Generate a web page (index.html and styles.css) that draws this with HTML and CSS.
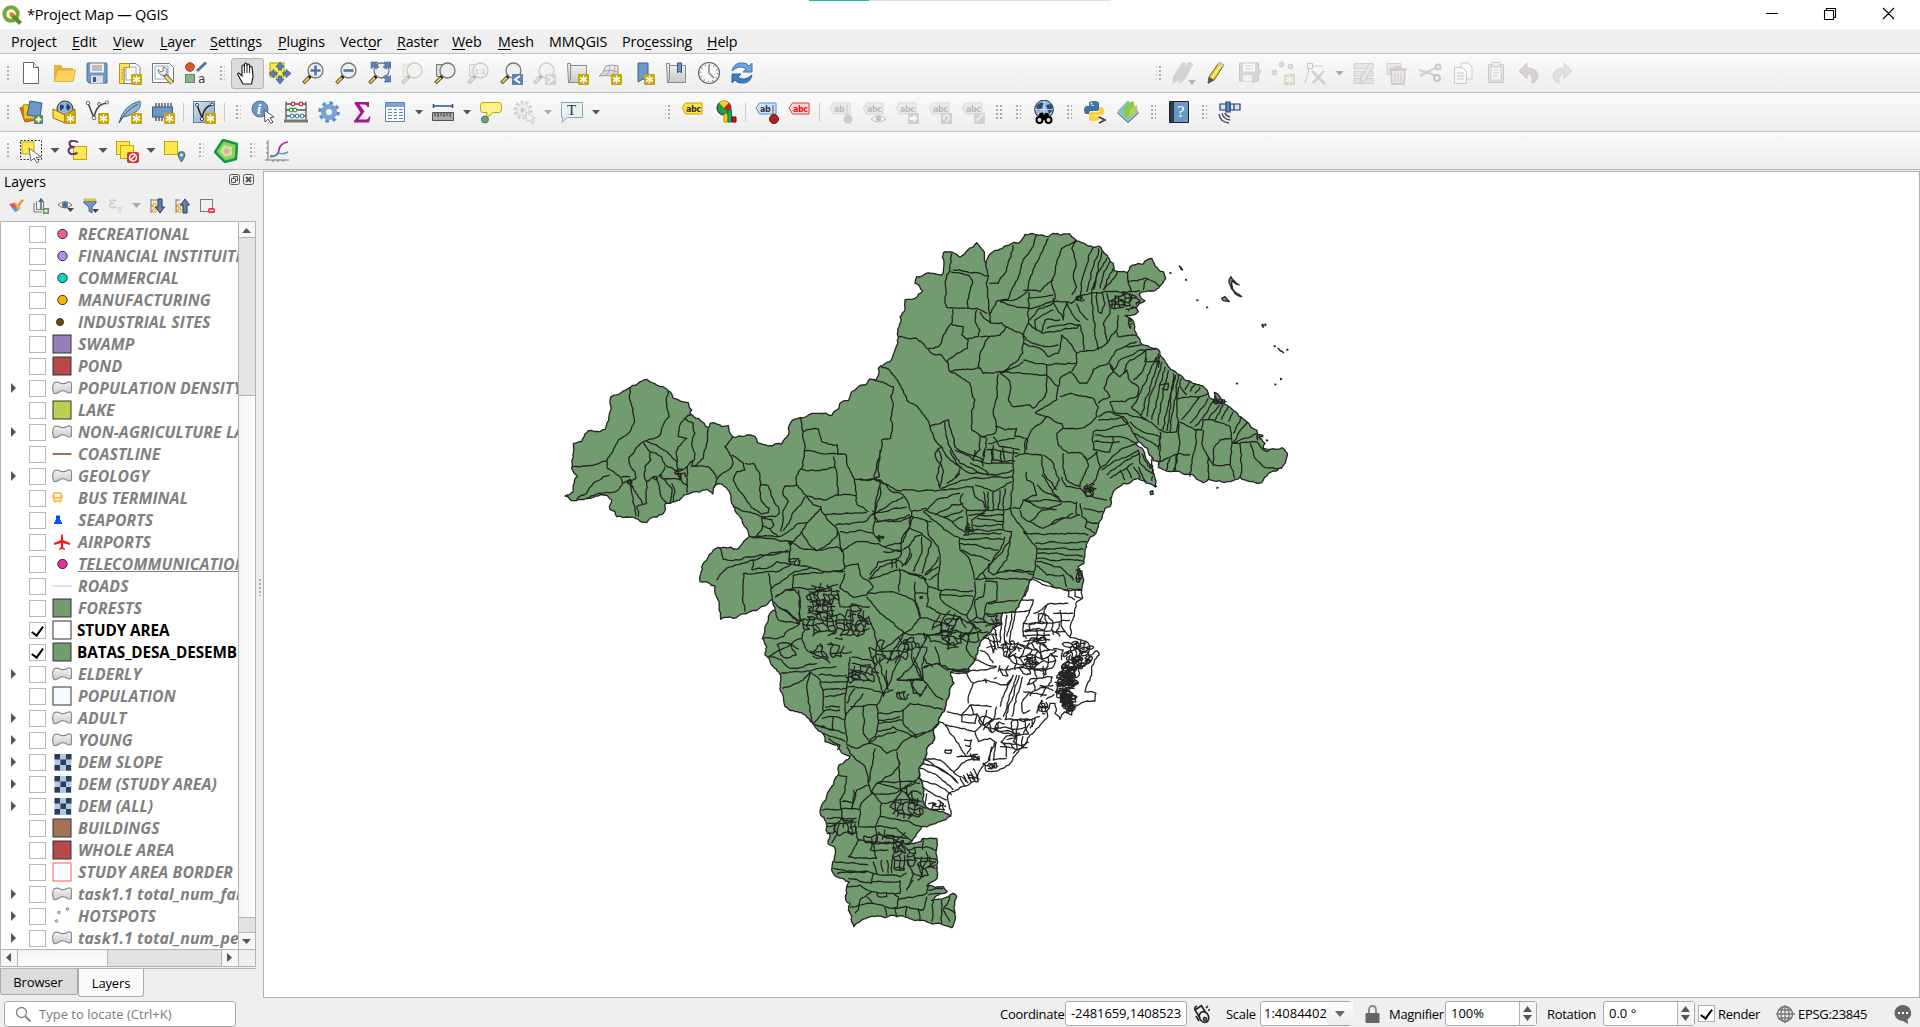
FILE: index.html
```html
<!DOCTYPE html>
<html lang="en">
<head>
<meta charset="utf-8">
<title>*Project Map — QGIS</title>
<link rel="stylesheet" href="styles.css">
</head>
<body>
<svg class="defs" width="0" height="0">
<defs>
<linearGradient id="gg" x1="0" y1="0" x2="0" y2="1"><stop offset="0" stop-color="#f4f4f4"/><stop offset="1" stop-color="#c9c9c9"/></linearGradient>
<linearGradient id="gb" x1="0" y1="0" x2="1" y2="1"><stop offset="0" stop-color="#dde7f2"/><stop offset="1" stop-color="#7d9fc8"/></linearGradient>
<g id="star"><rect x="13" y="13" width="11" height="11" rx="1" fill="#c9a50b"/><path d="M18.500 14.500v8M15 16.500l7 4M22 16.500l-7 4" stroke="#fff" stroke-width="1.500"/></g>
<g id="lens"><path d="M9 15.500L2.500 22" stroke="#333" stroke-width="3.600"/><path d="M8 16.500L3 21.500" stroke="#f3c13a" stroke-width="2.200"/><path d="M11 13.500l-3 3" stroke="#111" stroke-width="3"/><circle cx="14.500" cy="9.500" r="7.500" fill="#eee" stroke="#777" stroke-width="1.300"/></g>
<g id="tag"><path d="M1 8l3.500-5H21v11H4.500z"/></g>
<symbol id="new" viewBox="0 0 24 24"><path d="M4.500 1.500h10l5 5v16h-15z" fill="#fff" stroke="#666"/><path d="M14.500 1.500v5h5" fill="#eee" stroke="#666"/></symbol>
<symbol id="open" viewBox="0 0 24 24"><path d="M2 20V4h7l2 3h10v13z" fill="#e6b13c"/><path d="M2 20.500L6 9h17.500l-2.500 11.500z" fill="#ffd45e" stroke="#e0ae3a"/></symbol>
<symbol id="save" viewBox="0 0 24 24"><path d="M2 3q0-1 1-1h18q1 0 1 1v19H4l-2-2z" fill="#6d97c4" stroke="#4d7096"/><rect x="5" y="2.500" width="14" height="9" fill="#eef0ee"/><path d="M7 5h10M7 7h10M7 9h10" stroke="#888"/><rect x="6" y="14.500" width="12" height="7.500" fill="#ddd"/><rect x="8" y="16" width="3" height="5" fill="#43597c"/></symbol>
<symbol id="layout" viewBox="0 0 24 24"><path d="M6 2.500h12l4 4v16H6z" fill="#fff" stroke="#777"/><path d="M8 6h10v13H8z" fill="none" stroke="#8aa4d8"/><path d="M1.500 2.500h10v4H6v16H1.500z" fill="#fbe35e" stroke="#b8931c"/><path d="M3 9h2M3 12h2M3 15h2M3 18h2" stroke="#b8931c"/><use href="#star"/></symbol>
<symbol id="manager" viewBox="0 0 24 24"><path d="M1.500 2.500h17l4 4v15h-21z" fill="#fff" stroke="#777"/><path d="M4 5h13v13H4z" fill="none" stroke="#8aa4d8"/><path d="M13 13l8 9" stroke="#555" stroke-width="4.500"/><path d="M14.500 15l6.500 7" stroke="#f0ce62" stroke-width="3"/><path d="M7 8.500l3 2.500 2-1 0-3.500q5 0 4 5l-2 3q-7 0-7-6z" fill="#eee" stroke="#777"/></symbol>
<symbol id="style" viewBox="0 0 24 24"><circle cx="6" cy="6" r="4.300" fill="#d9592c" stroke="#a33e18"/><path d="M13 10L22 1.500" fill="none" stroke="#4f79a6" stroke-width="3"/><rect x="1.500" y="13.500" width="9" height="8" fill="#8fb28d" stroke="#5b8a5a"/><text x="14" y="22" class="ic-a">a</text></symbol>
<symbol id="hand" viewBox="0 0 24 24"><path d="M8 22L3 13q-1-2 1-2l3 3V4q1-2 2.400 0V2q1.300-2 2.600 0v1q1.300-1.800 2.600 0v2q1.300-1.500 2.600.5L18 15l-1.500 7z" fill="#fff" stroke="#222" stroke-width="1.200"/><path d="M9.400 4v7M12 3v8M14.600 5v6" stroke="#222"/></symbol>
<symbol id="panto" viewBox="0 0 24 24"><rect x="2" y="2" width="14" height="14" fill="#fce94f" stroke="#b8a000"/><path d="M12 1l4 5h-2.500v3h-3V6H8zM12 23l4-5h-2.500v-3h-3v3H8zM1 12.500l5-4V11h3v3H6v2.500zM23 12.500l-5-4V11h-3v3h3v2.500z" fill="#5b84b1" stroke="#375a80" stroke-width=".8"/></symbol>
<symbol id="zin" viewBox="0 0 24 24"><use href="#lens"/><path d="M14.500 4.500v10M9.500 9.500h10" stroke="#4a78a8" stroke-width="2.600"/></symbol>
<symbol id="zout" viewBox="0 0 24 24"><use href="#lens"/><path d="M9.500 9.500h10" stroke="#4a78a8" stroke-width="2.600"/></symbol>
<symbol id="zfull" viewBox="0 0 24 24"><use href="#lens"/><path d="M4 1h7L9 3l3 3-3 2-3-2-2 2zM24 1h-7l2 2-3 3 3 2 3-2 2 2zM24 21h-7l2-2-3-3 3-2 3 2 2-2z" fill="#5b84b1" stroke="#375a80" stroke-width=".5"/></symbol>
<symbol id="zsel" viewBox="0 0 24 24"><path d="M3 3h14v13H3z" fill="#fce94f" stroke="#aaa"/><use href="#lens"/></symbol>
<symbol id="zlay" viewBox="0 0 24 24"><path d="M3.500 3.500h12v12h-12z" fill="#ddd" stroke="#777"/><use href="#lens"/></symbol>
<symbol id="znat" viewBox="0 0 24 24"><path d="M3.500 3.500h12v12h-12z" fill="#ddd" stroke="#777"/><use href="#lens"/><text x="9" y="13" class="ic-s">1:1</text></symbol>
<symbol id="zlast" viewBox="0 0 24 24"><use href="#lens"/><rect x="13" y="13" width="11" height="11" fill="#5b84b1"/><path d="M21 15l-5 3.500 5 3.500" fill="none" stroke="#fff" stroke-width="1.800"/></symbol>
<symbol id="znext" viewBox="0 0 24 24"><use href="#lens"/><rect x="13" y="13" width="11" height="11" fill="#89a"/><path d="M16 15l5 3.500-5 3.500" fill="none" stroke="#fff" stroke-width="1.800"/></symbol>
<symbol id="newmap" viewBox="0 0 24 24"><path d="M2.500 2.500h3v2h16v17h-18z" fill="url(#gg)" stroke="#888"/><path d="M5.500 2.500v16l-2 3" fill="none" stroke="#888"/><use href="#star"/></symbol>
<symbol id="new3d" viewBox="0 0 24 24"><path d="M1 15q4-2 7-10 6-2 12 0v12q-9-4-19-2z" fill="url(#gg)" stroke="#999"/><path d="M5 10q8-2 15 1M12 4q0 8-5 11M17 4q0 8-3 12" fill="none" stroke="#999" stroke-width=".8"/><use href="#star"/></symbol>
<symbol id="book" viewBox="0 0 24 24"><path d="M7 2h10v20l-5-4-5 3z" fill="#6d97c4" stroke="#3f6492"/><use href="#star"/></symbol>
<symbol id="showbook" viewBox="0 0 24 24"><path d="M2.500 2.500h3v2h16v17h-18z" fill="url(#gg)" stroke="#888"/><path d="M5.500 2.500v16l-2 3" fill="none" stroke="#888"/><path d="M13.500 2h4v10l-2-2-2 2z" fill="#6d97c4" stroke="#2f4f7c"/></symbol>
<symbol id="clock" viewBox="0 0 24 24"><circle cx="12" cy="12" r="10.500" fill="#f6f6f6" stroke="#666" stroke-width="1.200"/><circle cx="12" cy="12" r="8.500" fill="none" stroke="#5b84b1" stroke-width="1.500" stroke-dasharray="1 3.450"/><path d="M12 4v8l5 5" fill="none" stroke="#888" stroke-width="1.500"/></symbol>
<symbol id="refresh" viewBox="0 0 24 24"><path d="M2 10Q4 1 13 2q4 0 6 3l3-3v9h-9l3-3q-6-5-14 2z" fill="#6fa3dc" stroke="#3c74b4"/><path d="M22 14q-2 9-11 8-4 0-6-3l-3 3v-9h9l-3 3q6 5 14-2z" fill="#3f7bc0" stroke="#2e66a6"/></symbol>
<symbol id="pencil" viewBox="0 0 24 24"><path d="M3 22l1-6L14 1.500l5 2.500-10 15z" fill="#e7cf2c" stroke="#6c6420"/><path d="M7 17L16.500 3" stroke="#fff6a0" stroke-width="1.500"/><path d="M3 23l1-7 5 3z" fill="#555"/><path d="M14 1l5 3-1.500 2.500-5-3z" fill="#ccc"/></symbol>
<symbol id="pencils" viewBox="0 0 24 24"><path d="M1 22l1-7L11 1l3 2-8 16zM7 22l1-7L17 1l4 2-9 16z" fill="#a09080" stroke="#888"/><path d="M16 19h8l-4 5z" fill="#333"/></symbol>
<symbol id="sedits" viewBox="0 0 24 24"><path d="M1.500 2h19v18h-19z" fill="#999" stroke="#666"/><path d="M5 2.500h12v8H5z" fill="#fff"/><path d="M5 14h9v6H5z" fill="#eee"/><path d="M7 5h8M7 8h8" stroke="#888"/><path d="M14 23l1-5 7-10 2 2-7 11z" fill="#b08a80"/></symbol>
<symbol id="addpt" viewBox="0 0 24 24"><g fill="#aaa" stroke="#777"><circle cx="3.500" cy="11.500" r="2.500"/><circle cx="10.500" cy="3.500" r="2.500"/><circle cx="19.500" cy="5.500" r="2.500"/></g><use href="#star"/></symbol>
<symbol id="vertex" viewBox="0 0 24 24"><path d="M1 22L6 5h13" fill="none" stroke="#666"/><rect x="3.500" y="2.500" width="5" height="5" fill="#eee" stroke="#666"/><path d="M8 10l13 13M20 10L9 22" stroke="#888" stroke-width="2.500"/></symbol>
<symbol id="form" viewBox="0 0 24 24"><g fill="#c9c8a0" stroke="#888860"><path d="M2 2.500h19v5H2zM2 10h19v5H2zM2 17.500h19v5H2z"/></g><path d="M8 22l1-6L18 2l4 2-9 15z" fill="#ccc" stroke="#777"/></symbol>
<symbol id="trash" viewBox="0 0 24 24"><path d="M2 2.500h14v11H2z" fill="#c9c8a0" stroke="#888860"/><path d="M6 9h14l-1 14H7zM4 8h18M10 6h6" fill="#f0c8c8" stroke="#a06060" stroke-width="1.500"/><path d="M10 12v9M13 12v9M16 12v9" stroke="#a06060"/></symbol>
<symbol id="cut" viewBox="0 0 24 24"><path d="M1 9l18 6M2 15L19 6" stroke="#888" stroke-width="2.200"/><g fill="none" stroke="#8a6a6a" stroke-width="2"><circle cx="20" cy="6" r="2.500"/><circle cx="19" cy="17" r="3"/></g></symbol>
<symbol id="copy" viewBox="0 0 24 24"><g fill="#fff" stroke="#777"><path d="M10 2h7l4 4v12H10z"/><path d="M3.500 6.500h8l4 4v12h-12z"/></g><path d="M6 12h7M6 15h7M6 18h7" stroke="#777"/></symbol>
<symbol id="paste" viewBox="0 0 24 24"><path d="M4.500 3.500h15v18h-15z" fill="#bbb" stroke="#777"/><path d="M7 6h10v13H7z" fill="#fff" stroke="#888"/><path d="M8 1.500h8v4H8z" fill="#ddd" stroke="#777"/><path d="M9 9h6M9 12h6M9 15h4" stroke="#777"/></symbol>
<symbol id="undo" viewBox="0 0 24 24"><path d="M2 10l8-8v5q11 0 11 8 0 5-6 7 1-10-5-9v5z" fill="#b08870" stroke="#997766"/></symbol>
<symbol id="redo" viewBox="0 0 24 24"><path d="M22 10l-8-8v5Q3 7 3 15q0 5 6 7-1-10 5-9v5z" fill="#a3bfa3" stroke="#889988"/></symbol>
<symbol id="dsm" viewBox="0 0 24 24"><path d="M1 8l13-3 3 15-11 2z" fill="#d9713a" stroke="#b0501c"/><path d="M4 5l13-1v15H5z" fill="#f5c518" stroke="#a88500"/><path d="M11 1l12 2-2 14-13-2z" fill="#6d97c4" stroke="#335a88"/><rect x="15" y="15" width="9" height="9" rx="1" fill="#4f8f55"/><path d="M19.500 16.500v6M16.500 19.500h6" stroke="#fff" stroke-width="2"/></symbol>
<symbol id="gpkg" viewBox="0 0 24 24"><circle cx="13" cy="9" r="8" fill="#8fb3d9" stroke="#333"/><path d="M8 5q4-2 4 3l-4 3zM15 3l4 4-3 4-2-3z" fill="#2c4460"/><path d="M1 9l12 6v8L1 18z" fill="#fbe24a" stroke="#8a7000"/><path d="M13 15l10-6v9l-10 5z" fill="#e0b400" stroke="#8a7000"/><use href="#star"/></symbol>
<symbol id="shp" viewBox="0 0 24 24"><path d="M3 3l6 15M9 18q2-14 13-15" fill="none" stroke="#444" stroke-width="1.600"/><g fill="#fff" stroke="#666"><circle cx="3" cy="3" r="1.800"/><circle cx="9" cy="18" r="1.800"/><circle cx="14" cy="4" r="1.500"/><circle cx="22" cy="2.500" r="1.500"/></g><use href="#star"/></symbol>
<symbol id="feather" viewBox="0 0 24 24"><path d="M1 23Q5 5 22 1q2 8-6 12-7 4-11 4z" fill="#8fb3d9" stroke="#4a6f96"/><path d="M1 23Q8 10 20 4" fill="none" stroke="#35587e"/><use href="#star"/></symbol>
<symbol id="memory" viewBox="0 0 24 24"><path d="M5 3v18M8 3v18M11 3v18M14 3v18M17 3v18M20 3v18" stroke="#333" stroke-width="1.200"/><rect x="1.500" y="7" width="20" height="10" fill="#6d97c4" stroke="#335a88"/><use href="#star"/></symbol>
<symbol id="virt" viewBox="0 0 24 24"><rect x="1.500" y="1.500" width="21" height="21" fill="url(#gb)" stroke="#5b7da5"/><path d="M5 5l5 13q2-12 10-13" fill="none" stroke="#222" stroke-width="1.500"/><g fill="#fff" stroke="#444"><circle cx="5" cy="5" r="1.600"/><circle cx="10" cy="19" r="1.600"/><circle cx="20" cy="4.500" r="1.400"/></g><use href="#star"/></symbol>
<symbol id="ident" viewBox="0 0 24 24"><circle cx="9" cy="9" r="8" fill="#6d97c4" stroke="#4d7096"/><text x="6" y="14" class="ic-i">i</text><path d="M13 10l10 7-4 .7 3 4.500-2 1.300-3-4.500-3 3z" fill="#fff" stroke="#555"/></symbol>
<symbol id="abacus" viewBox="0 0 24 24"><path d="M2 1.500v18M22 1.500v18M2 4h20M2 10h20M2 16h20" stroke="#555" stroke-width="1.300"/><path d="M0 19.500h24v3H0z" fill="#777"/><g fill="#fff" stroke-width="1.200"><circle cx="9" cy="4" r="1.800" stroke="#c22"/><circle cx="17" cy="4" r="1.800" stroke="#c22"/><circle cx="7" cy="10" r="1.800" stroke="#494"/><circle cx="11" cy="10" r="1.800" stroke="#494"/><circle cx="8" cy="16" r="1.800" stroke="#48b"/><circle cx="13" cy="16" r="1.800" stroke="#48b"/><circle cx="18" cy="16" r="1.800" stroke="#48b"/></g></symbol>
<symbol id="gear" viewBox="0 0 24 24"><circle cx="12" cy="12" r="9" fill="none" stroke="#5b8cc4" stroke-width="3.500" stroke-dasharray="3.500 3.570"/><circle cx="12" cy="12" r="5.500" fill="#f6f6f6" stroke="#79a3d2" stroke-width="5"/></symbol>
<symbol id="sigma" viewBox="0 0 24 24"><path d="M5 2h14v5h-1.500q-.5-2.500-3-2.500H9.500l5 7-6 8H16q2.500 0 3-3h1.500L19 22.500H4v-1.500l6.500-8.500L4.500 3.500z" fill="#a31594"/></symbol>
<symbol id="table" viewBox="0 0 24 24"><path d="M2.500 2.500h19v19h-19z" fill="#fff" stroke="#5b84b1"/><path d="M3 3h18v4H3z" fill="#7ba6d6"/><path d="M5 9.500h4M11 9.500h3M16 9.500h4M5 12.500h4M11 12.500h3M16 12.500h4M5 15.500h4M11 15.500h3M16 15.500h4M5 18.500h4M11 18.500h3M16 18.500h4" stroke="#5b84b1" stroke-width="1.200"/></symbol>
<symbol id="ruler" viewBox="0 0 24 24"><path d="M2 6h20M2.500 4v4M21.500 4v4" stroke="#31577f" stroke-width="1.600"/><path d="M1.500 12.500h21v8h-21z" fill="#aaa" stroke="#555"/><path d="M4 13v3M7 13v4M10 13v3M13 13v4M16 13v3M19 13v4" stroke="#333"/></symbol>
<symbol id="tip" viewBox="0 0 24 24"><path d="M4 2.500h16q2.500 0 2.500 3v4q0 3-2.500 3h-6l-7 6 1-6H4q-2.500 0-2.500-3v-4q0-3 2.500-3z" fill="#fdf18f" stroke="#c8a400"/><circle cx="6" cy="19.500" r="3.500" fill="#6fa06c" stroke="#44709a"/></symbol>
<symbol id="action" viewBox="0 0 24 24"><circle cx="11" cy="10" r="8" fill="none" stroke="#888" stroke-width="3" stroke-dasharray="3 2"/><circle cx="11" cy="10" r="6" fill="#ddd" stroke="#999"/><path d="M9 7l5 3-5 3z" fill="#666"/><path d="M14 12l9 6-3 .7 2 4-2 1-2-4-3 2z" fill="#fff" stroke="#777"/></symbol>
<symbol id="note" viewBox="0 0 24 24"><path d="M1.500 2.500h21v15H7l-5 5 1-5H1.500z" fill="#e8f1f3" stroke="#8aa"/><text x="7" y="15" class="ic-t">T</text></symbol>
<symbol id="abc" viewBox="0 0 24 24"><use href="#tag" fill="#ffe14d" stroke="#c8a400"/><text x="5" y="11.500" class="ic-l">abc</text></symbol>
<symbol id="diag" viewBox="0 0 24 24"><circle cx="10" cy="8" r="7" fill="#19a24a" stroke="#222"/><path d="M10 8L5 2.500Q10-1 15 3z" fill="#fbd21b"/><path d="M10 8l5-5q4 5 0 10z" fill="#d21919"/><path d="M10 14h4v8h-4z" fill="#fbd21b" stroke="#c80"/><path d="M14 10h3.500v12H14z" fill="#19b15a" stroke="#073"/><path d="M18 17h4v5h-4z" fill="#d21919" stroke="#700"/></symbol>
<symbol id="pin" viewBox="0 0 24 24"><use href="#tag" fill="#cfe4fb" stroke="#4a90e2"/><text x="5" y="11.500" class="ic-l">ab</text><path d="M18 5v12" stroke="#999" stroke-width="2"/><circle cx="19" cy="19" r="4.500" fill="#b02020" stroke="#701010"/></symbol>
<symbol id="abcred" viewBox="0 0 24 24"><use href="#tag" fill="#fdd" stroke="#e33"/><text x="5" y="11.500" class="ic-l red">abc</text></symbol>
<symbol id="pin2" viewBox="0 0 24 24"><use href="#tag" fill="#dcd9a8" stroke="#998"/><text x="5" y="11.500" class="ic-l">ab</text><path d="M18 5v12" stroke="#999" stroke-width="2"/><circle cx="19" cy="19" r="4.500" fill="#977"/></symbol>
<symbol id="eye2" viewBox="0 0 24 24"><use href="#tag" fill="#dcd9a8" stroke="#998"/><text x="5" y="11.500" class="ic-l">abc</text><path d="M9 19q7-7 15 0-8 6-15 0z" fill="#fff" stroke="#555"/><circle cx="16.500" cy="18.500" r="2.500" fill="#555"/></symbol>
<symbol id="mv2" viewBox="0 0 24 24"><use href="#tag" fill="#dcd9a8" stroke="#998"/><text x="5" y="11.500" class="ic-l">abc</text><rect x="13" y="13" width="11" height="11" fill="#888"/><path d="M14.500 17h4v-2.500l4.500 4-4.500 4V20h-4z" fill="#fff"/></symbol>
<symbol id="rot2" viewBox="0 0 24 24"><use href="#tag" fill="#dcd9a8" stroke="#998"/><text x="5" y="11.500" class="ic-l">abc</text><rect x="13" y="13" width="11" height="11" fill="#888"/><path d="M16 20v-3.500q2.500-3 5 0V19l-3 3" fill="none" stroke="#fff" stroke-width="1.600"/></symbol>
<symbol id="ed2" viewBox="0 0 24 24"><use href="#tag" fill="#dcd9a8" stroke="#998"/><text x="5" y="11.500" class="ic-l">abc</text><rect x="13" y="13" width="11" height="11" fill="#997"/><path d="M15 22l1-3 5-5 1 1-5 5z" fill="#fff"/></symbol>
<symbol id="globe" viewBox="0 0 24 24"><circle cx="12" cy="9.500" r="9.300" fill="#9bb9da" stroke="#223"/><path d="M4 6q4-5 8-3l-2 5-4 3zM14 5l5-1 2 6-4 4zM9 12l4 1-2 4z" fill="#2b4d78"/><path d="M12 .5v18M3 9.500h18" stroke="#dde8f5" stroke-width=".8"/><path d="M4 20l4-7h2.500l1.500 2 1.500-2H16l4 7z" fill="#000"/><circle cx="7.500" cy="20" r="3" fill="#ddd" stroke="#000" stroke-width="2"/><circle cx="16.500" cy="20" r="3" fill="#ddd" stroke="#000" stroke-width="2"/></symbol>
<symbol id="python" viewBox="0 0 24 24"><path d="M6 6V3q0-2 5-2t5 2v6q0 2-2 2H8q-2 0-2 3H3q-2-1-2-4t2-4h8V5z" fill="#3873a3"/><path d="M16 7h3q2 1 2 4t-2 4h-8v1h5v3q0 2-5 2t-5-2v-5q0-2 2-2h6q2 0 2-3z" fill="#fcd13f"/><circle cx="8.500" cy="3.500" r="1" fill="#fff"/><path d="M16 17l6 3-6 3" fill="none" stroke="#333" stroke-width="1.500"/></symbol>
<symbol id="leaf" viewBox="0 0 24 24"><path d="M1 13L12 2l11 11-11 10z" fill="#4f7f86"/><path d="M1 11L12 0l11 11-11 10z" fill="#7fc4bd" stroke="#fff" stroke-width=".6"/><path d="M10 18Q4 7 17 1q3 4-1 12z" fill="#8dc63f"/><path d="M12 18Q13 7 21 5q2 9-9 13z" fill="#a8d65a"/></symbol>
<symbol id="help" viewBox="0 0 24 24"><path d="M2.500 1.500h19v21h-19z" fill="#6d97c4" stroke="#222"/><path d="M3 2h4v20H3z" fill="#2b3d50"/><text x="10" y="17" class="ic-q">?</text></symbol>
<symbol id="sat" viewBox="0 0 24 24"><g stroke="#1d3f70" stroke-width="1.200"><path d="M2 4h7v6H2zM12 4h10v6H12z" fill="#d6e4f3"/><path d="M8 2h4v10H8z" fill="#5b8cc4"/><path d="M16 4v6" fill="none"/></g><path d="M1 14q1 8 10 9M4 13q1 6 8 7M7 13q1 3 5 4" fill="none" stroke="#446" stroke-width="1.400"/></symbol>
<symbol id="select" viewBox="0 0 24 24"><path d="M1.500 1.500h21v19h-21z" fill="none" stroke="#333" stroke-dasharray="2 1.500"/><rect x="3" y="3" width="12" height="12" fill="#fce94f" stroke="#c8a400"/><path d="M10 9l12 9-5 .5 3 4-2 1.500-3-5-3 3z" fill="#fff" stroke="#666"/></symbol>
<symbol id="eps" viewBox="0 0 24 24"><rect x="6.500" y="7.500" width="13" height="13" fill="#fce94f" stroke="#c8a400"/><path d="M11 3Q2 0 2.500 5q.5 3 5 3-6 0-6 4 1 5 9 2" fill="none" stroke="#64376e" stroke-width="2"/></symbol>
<symbol id="desel" viewBox="0 0 24 24"><g fill="#fce94f" stroke="#c8a400"><rect x="1.500" y="2.500" width="13" height="13"/><rect x="5.500" y="6.500" width="13" height="13"/></g><rect x="12" y="13" width="12" height="11" rx="2" fill="#d33"/><circle cx="18" cy="18.500" r="3.500" fill="none" stroke="#fff" stroke-width="1.500"/><path d="M15.500 21l5-5" stroke="#fff" stroke-width="1.500"/></symbol>
<symbol id="loc" viewBox="0 0 24 24"><rect x="1.500" y="2.500" width="13" height="13" fill="#fce94f" stroke="#c8a400"/><path d="M18.500 23q-3.500-5-3.500-7a3.500 3.500 0 017 0q0 2-3.500 7z" fill="#6d8fa8" stroke="#4c6c85"/><circle cx="18.500" cy="16" r="1.200" fill="#fff"/></symbol>
<symbol id="penta" viewBox="0 0 24 24"><path d="M9 1l14 4-1 15-11 3L1 13z" fill="#8fd05a" stroke="#14964a" stroke-width="2.500" stroke-linejoin="round"/><path d="M10 6l8 2v8l-7 2-5-6z" fill="#c6ea8d"/><circle cx="12.500" cy="12" r="2.800" fill="#f0a0b0"/></symbol>
<symbol id="prof" viewBox="0 0 24 24"><path d="M3 1v20h21M1 4h2M1 9h2M1 14h2M0 21h3M8 23v-2M13 23v-2M18 23v-2" fill="none" stroke="#777"/><path d="M5 17q8 1 9-6 1-7 9-8" fill="none" stroke="#b4229f" stroke-width="1.700"/><path d="M5 18q7-1 9-4 3 2 9-1" fill="none" stroke="#4aa3b5" stroke-width="1.500"/></symbol>
<symbol id="brush" viewBox="0 0 16 16"><path d="M9 7l5-6 2 1-5 7z" fill="#d99a3d"/><path d="M7 4l6 6-3 3-6-6z" fill="#e8b04a"/><path d="M1 6l5-1 3 5-4 1z" fill="#e4554a"/><path d="M4 10l4-1 2 4-3 1z" fill="#5a9ad0"/></symbol>
<symbol id="addg" viewBox="0 0 16 16"><path d="M1 5v9h8M3.500 3.500v8h7v-8h-1" fill="none" stroke="#777"/><path d="M8 11V1.500M6 4l2-3 2 3" fill="none" stroke="#357" stroke-width="1.300"/><rect x="10" y="10" width="6" height="6" fill="#5a9a5a"/><path d="M13 11v4M11 13h4" stroke="#fff"/></symbol>
<symbol id="eyeb" viewBox="0 0 16 16"><path d="M0 7q7-7 14 0-7 6-14 0z" fill="#eee" stroke="#777"/><circle cx="7" cy="7" r="3" fill="#4a6f96"/><path d="M9 10h7l-3.500 4z" fill="#444"/></symbol>
<symbol id="filt" viewBox="0 0 16 16"><path d="M1 3h12v2L9 9v6l-3-2V9L1 5z" fill="#6d97c4" stroke="#456a94"/><path d="M1 1h12v2H1z" fill="#f7dd3f" stroke="#b90" stroke-width=".6"/><path d="M9 11h7l-3.500 4z" fill="#444"/></symbol>
<symbol id="epsf" viewBox="0 0 16 16"><path d="M8 3Q2 1 2 3.500 3 5.500 6 5.500 1 5 1.500 8 3 11 8 8.500" fill="none" stroke="#888" stroke-width="1.600"/><path d="M8 9h7v2l-2 1v4l-3-1v-3L8 11z" fill="#bbb"/></symbol>
<symbol id="expd" viewBox="0 0 16 16"><path d="M2 1v14M2 2h7M2 13h4M2 8h4" fill="none" stroke="#777"/><path d="M4 6h3v3H4zM4 11h3v3H4z" fill="#fff" stroke="#e90"/><path d="M9 1h4v8h2.500L11 15 6.500 9H9z" fill="#5b84b1" stroke="#335"/></symbol>
<symbol id="coll" viewBox="0 0 16 16"><path d="M2 1v14M2 2h4M2 13h4M2 8h4" fill="none" stroke="#777"/><path d="M4 6h3v3H4zM4 11h3v3H4z" fill="#fff" stroke="#e90"/><path d="M9 15h4V7h2.500L11 1 6.500 7H9z" fill="#5b84b1" stroke="#335"/></symbol>
<symbol id="rem" viewBox="0 0 16 16"><rect x="1.500" y="1.500" width="12" height="12" fill="none" stroke="#777"/><rect x="9" y="10" width="7" height="5" rx="1.500" fill="#e34"/><path d="M10.500 12.500h4" stroke="#fff" stroke-width="1.300"/></symbol>
<symbol id="poly" viewBox="0 0 20 14"><path d="M2 2Q5 0 9 2.500 14 3 17 .8q3 0 2.500 4V11q-2 2-5 0-4-3-8 .5-4 2-5 .5Q-.5 6 2 2z" fill="url(#gg)" stroke="#8a8a8a" stroke-width="1.200"/></symbol>
</defs>
</svg>

<div class="titlebar">
  <svg class="logo" viewBox="0 0 20 20"><circle cx="9" cy="9" r="6.700" fill="none" stroke="#76a832" stroke-width="4"/><path d="M10 10l8.500 8.500" stroke="#4f8f2c" stroke-width="4"/><path d="M7.500 7.500h4l1 4-5 0z" fill="#ee7913"/></svg>
  <span class="t-title">*Project Map — QGIS</span>
  <i class="load"><b></b></i>
  <svg class="wbtn" viewBox="0 0 160 30"><path d="M10 13.500h12M68.500 10.500h9v9h-9zM70.500 10V8.500h9v9H78M127 8l11 11M138 8l-11 11" fill="none" stroke="#000" stroke-width="1.100"/></svg>
</div>
<div class="menubar">
  <span>Pro<u>j</u>ect</span><span><u>E</u>dit</span><span><u>V</u>iew</span><span><u>L</u>ayer</span><span><u>S</u>ettings</span><span><u>P</u>lugins</span><span>Vect<u>o</u>r</span><span><u>R</u>aster</span><span><u>W</u>eb</span><span><u>M</u>esh</span><span>MMQGIS</span><span>Pro<u>c</u>essing</span><span><u>H</u>elp</span>
</div>
<div class="bar">
  <i class="h first"></i>
  <svg class="ic"><use href="#new"/></svg><svg class="ic"><use href="#open"/></svg><svg class="ic"><use href="#save"/></svg><svg class="ic"><use href="#layout"/></svg><svg class="ic"><use href="#manager"/></svg><svg class="ic"><use href="#style"/></svg>
  <i class="h"></i>
  <span class="down"><svg class="ic"><use href="#hand"/></svg></span><svg class="ic"><use href="#panto"/></svg><svg class="ic"><use href="#zin"/></svg><svg class="ic"><use href="#zout"/></svg><svg class="ic"><use href="#zfull"/></svg><svg class="ic off"><use href="#zsel"/></svg><svg class="ic"><use href="#zlay"/></svg><svg class="ic off"><use href="#znat"/></svg><svg class="ic"><use href="#zlast"/></svg><svg class="ic off"><use href="#znext"/></svg><svg class="ic"><use href="#newmap"/></svg><svg class="ic"><use href="#new3d"/></svg><svg class="ic"><use href="#book"/></svg><svg class="ic"><use href="#showbook"/></svg><svg class="ic"><use href="#clock"/></svg><svg class="ic"><use href="#refresh"/></svg>
  <i class="gap1"></i><i class="h slim"></i>
  <svg class="ic off"><use href="#pencils"/></svg><svg class="ic"><use href="#pencil"/></svg><svg class="ic off"><use href="#sedits"/></svg><svg class="ic off"><use href="#addpt"/></svg><svg class="ic off"><use href="#vertex"/></svg><i class="a dim"></i><svg class="ic off"><use href="#form"/></svg><svg class="ic off"><use href="#trash"/></svg><svg class="ic off"><use href="#cut"/></svg><svg class="ic off"><use href="#copy"/></svg><svg class="ic off"><use href="#paste"/></svg><svg class="ic off"><use href="#undo"/></svg><svg class="ic off"><use href="#redo"/></svg>
</div>
<div class="bar">
  <i class="h first"></i>
  <svg class="ic"><use href="#dsm"/></svg><svg class="ic"><use href="#gpkg"/></svg><svg class="ic"><use href="#shp"/></svg><svg class="ic"><use href="#feather"/></svg><svg class="ic"><use href="#memory"/></svg><i class="s"></i><svg class="ic"><use href="#virt"/></svg><i class="s"></i>
  <i class="h"></i>
  <svg class="ic"><use href="#ident"/></svg><svg class="ic"><use href="#abacus"/></svg><svg class="ic"><use href="#gear"/></svg><svg class="ic"><use href="#sigma"/></svg><svg class="ic"><use href="#table"/></svg><i class="a"></i><svg class="ic"><use href="#ruler"/></svg><i class="a"></i><svg class="ic"><use href="#tip"/></svg><svg class="ic off"><use href="#action"/></svg><i class="a dim"></i><svg class="ic"><use href="#note"/></svg><i class="a"></i>
  <i class="gap2"></i><i class="h slim"></i>
  <svg class="ic"><use href="#abc"/></svg><svg class="ic"><use href="#diag"/></svg><i class="s"></i><svg class="ic"><use href="#pin"/></svg><svg class="ic"><use href="#abcred"/></svg><i class="s"></i><svg class="ic off"><use href="#pin2"/></svg><svg class="ic off"><use href="#eye2"/></svg><svg class="ic off"><use href="#mv2"/></svg><svg class="ic off"><use href="#rot2"/></svg><svg class="ic off"><use href="#ed2"/></svg>
  <i class="h wide"></i><i class="h"></i><svg class="ic"><use href="#globe"/></svg>
  <i class="h"></i><svg class="ic"><use href="#python"/></svg><svg class="ic"><use href="#leaf"/></svg>
  <i class="h"></i><svg class="ic"><use href="#help"/></svg>
  <i class="h"></i><svg class="ic"><use href="#sat"/></svg>
</div>
<div class="bar last">
  <i class="h first"></i>
  <svg class="ic"><use href="#select"/></svg><i class="a"></i><svg class="ic"><use href="#eps"/></svg><i class="a"></i><svg class="ic"><use href="#desel"/></svg><i class="a"></i><svg class="ic"><use href="#loc"/></svg>
  <i class="h"></i><svg class="ic"><use href="#penta"/></svg>
  <i class="h"></i><svg class="ic"><use href="#prof"/></svg>
</div>

<div class="main">
  <div class="dock">
    <div class="dock-title"><span>Layers</span>
      <svg viewBox="0 0 26 12" class="dock-btns"><g fill="none" stroke="#555"><rect x=".5" y=".5" width="10" height="10" rx="2"/><path d="M4.500 4.500V2.500h4v4h-2M2.500 4.500h4v4h-4z"/><rect x="14.500" y=".5" width="10" height="10" rx="2"/><path d="M17 3l5 5M22 3l-5 5" stroke-width="2"/></g></svg>
    </div>
    <div class="dock-tools">
      <svg><use href="#brush"/></svg><svg><use href="#addg"/></svg><svg><use href="#eyeb"/></svg><svg><use href="#filt"/></svg><svg class="off"><use href="#epsf"/></svg><i class="a dim"></i><svg><use href="#expd"/></svg><svg><use href="#coll"/></svg><svg><use href="#rem"/></svg>
    </div>
    <div class="treebox">
      <div class="tree" id="tree"></div>
      <div class="vs"><i class="btn up"></i><i class="handle"></i><i class="fill"></i><i class="tail"></i><i class="btn dn"></i></div>
      <div class="hs"><i class="btn lf"></i><i class="hh"></i><i class="hf"></i><i class="btn rt"></i></div>
      <div class="corner"></div>
    </div>
    <div class="tabs"><span class="tab back">Browser</span><span class="tab front">Layers</span></div>
  </div>
  <div class="split"></div>
  <div class="canvas"><svg id="map" viewBox="264 172 1655 825"></svg></div>
</div>

<div class="status">
  <div class="locate"><svg viewBox="0 0 16 16"><circle cx="6.500" cy="6.500" r="5" fill="none" stroke="#888" stroke-width="1.400"/><path d="M10.500 10.500l5 5" stroke="#888" stroke-width="2"/></svg><span>Type to locate (Ctrl+K)</span></div>
  <span class="lbl">Coordinate</span><span class="box ctr">-2481659,1408523</span>
  <svg class="mouse" viewBox="0 0 18 20"><g fill="none" stroke="#222" stroke-width="1.600"><path d="M4 2q-3 1-2 4l5 8M8 1l5 8M2 6l6-4"/><ellipse cx="11" cy="13" rx="4.500" ry="5.500" transform="rotate(-25 11 13)"/><circle cx="12" cy="15" r="1.500"/><path d="M13 4l2-2M15 6h2M3 12l3 5"/></g></svg>
  <span class="lbl">Scale</span><span class="box combo">1:4084402<i class="a"></i></span>
  <svg class="lock" viewBox="0 0 14 18"><path d="M3.500 8V5q0-4 3.500-4t3.500 4v3" fill="none" stroke="#888" stroke-width="1.800"/><rect x="0" y="8" width="14" height="10" rx="1" fill="#666"/></svg>
  <span class="lbl">Magnifier</span><span class="box spin">100%<i></i></span>
  <span class="lbl">Rotation</span><span class="box spin">0.0 °<i></i></span>
  <span class="chk on"></span><span class="lbl">Render</span>
  <svg class="crs" viewBox="0 0 20 18"><g fill="none" stroke="#777" stroke-width="1.300"><circle cx="10" cy="9" r="7.500"/><path d="M10 1v17M1 9h19M3 5h14M3 13h14"/><ellipse cx="10" cy="9" rx="4" ry="8"/></g></svg>
  <span class="lbl">EPSG:23845</span>
  <svg class="msg" viewBox="0 0 20 20"><path d="M10 1a8.500 8 0 100 16l5 3-.5-4.500A8.500 8 0 0010 1z" fill="#666"/><path d="M5 9h2M9 9h2M13 9h2" stroke="#fff" stroke-width="2"/></svg>
</div>
<script src="app.js"></script>
</body>
</html>
```
FILE: styles.css
```css
* { box-sizing: border-box; }
body { margin: 0; width: 1920px; height: 1027px; overflow: hidden; background: #efefef; color: #000; font: 14px "Open Sans", "Noto Sans", sans-serif; display: flex; flex-direction: column; }
.defs { position: absolute; }
i { font-style: normal; display: block; flex: none; }
svg { flex: none; display: block; }

.titlebar { height: 29px; flex: none; background: #fff; display: flex; align-items: center; }
.logo { width: 20px; height: 20px; margin-left: 2px; }
.t-title { margin-left: 5px; width: 143px; font-size: 14.5px; letter-spacing: -.2px; white-space: nowrap; }
.load { width: 302px; height: 1px; margin-left: 639px; align-self: flex-start; background: #ddd; }
.load b { display: block; width: 60px; height: 1px; background: #1bb3bf; }
.wbtn { width: 160px; height: 30px; margin-left: 645px; }
.menubar { height: 24px; flex: none; padding-left: 11px; display: grid; grid-template-columns: 61px 41px 47px 50px 68px 62px 57px 55px 46px 51px 73px 85px 50px; align-items: center; font-size: 14.3px; letter-spacing: -.15px; white-space: nowrap; }
.menubar u { text-underline-offset: 2px; }

.bar { height: 39px; flex: none; display: flex; align-items: center; border-top: 1px solid #c0c0c0; background: linear-gradient(#fbfbfb, #ededed); }
.last { border-bottom: 1px solid #b8b8b8; }
.ic { width: 24px; height: 24px; margin: 0 4.5px; }
.off { opacity: .32; filter: grayscale(.7); }
.down { width: 33px; height: 31px; margin: 0; padding: 3px 0; border: 1px solid #b4b4b4; border-radius: 3px; background: #dcdcdc; }
.down .ic { margin: 0 3.5px; }
.h { width: 18px; height: 17px; background: radial-gradient(circle, #aaa .7px, transparent 1px) 6px 0 / 4px 4px repeat; clip-path: inset(0 6px 0 6px); }
.h.first { width: 14.5px; clip-path: inset(0 5px 0 5px); }
.h.slim { width: 15.5px; clip-path: inset(0 4px 0 5px); }
.h.wide { width: 20px; clip-path: inset(0 7px 0 7px); }
.a { width: 15px; height: 5px; background: #555; clip-path: polygon(3px 0, 12px 0, 7.5px 5px); }
.a.dim { background: #a8a8a8; }
.s { width: 8px; height: 19px; background: linear-gradient(#ccc, #ccc) 3px 0 / 1px 100% no-repeat; }
.gap1 { width: 393px; }
.gap2 { width: 57px; }
.ic-a { font: 12px "DejaVu Sans", sans-serif; fill: #444; }
.ic-s { font: bold 7px "Liberation Sans", sans-serif; fill: #666; }
.ic-i { font: italic bold 15px "Liberation Serif", serif; fill: #fff; }
.ic-t { font: 15px "Liberation Serif", serif; fill: #333; }
.ic-q { font: 17px "Liberation Serif", serif; fill: #fff; }
.ic-l { font: bold 8px "DejaVu Sans", sans-serif; fill: #333; letter-spacing: -.4px; }
.ic-l.red { fill: #e11; }

.main { flex: 1; display: flex; min-height: 0; }
.dock { width: 256px; flex: none; display: flex; flex-direction: column; }
.dock-title { height: 24px; padding: 0 1px 2px 4px; display: flex; justify-content: space-between; align-items: center; }
.dock-title span { font-size: 14px; letter-spacing: -.1px; }
.dock-btns { width: 26px; height: 12px; margin-top: -2px; }
.dock-tools { height: 27px; display: flex; align-items: center; padding: 0 0 4px 8px; gap: 9px; }
.dock-tools svg { width: 16px; height: 16px; }
.dock-tools .a { margin: 0 -4px; }
.treebox { height: 746px; border: 1px solid #b4b4b4; display: grid; grid-template-columns: 1fr 17px; grid-template-rows: 1fr 17px; background: #fff; }
.tree { overflow: hidden; padding-top: 1px; }
.row { height: 22px; display: flex; align-items: center; white-space: nowrap; }
.tw { width: 28px; flex: none; }
.tw.open::before { content: ""; display: block; width: 5px; height: 10px; margin-left: 10px; background: #555; clip-path: polygon(0 0, 100% 50%, 0 100%); }
.cb { width: 17px; height: 17px; flex: none; border: 1px solid #b8b8b8; background: #fff; }
.sym { width: 32px; flex: none; height: 20px; display: flex; align-items: center; padding-left: 6px; }
.name { font: italic bold 15.8px "Open Sans", "Noto Sans", sans-serif; letter-spacing: .1px; color: #808080; flex: none; }
.name.on { font-style: normal; color: #000; font-size: 15.3px; letter-spacing: -.1px; margin-left: -1px; }
.name.ul { text-decoration: underline; }
.vs { border-left: 1px solid #b4b4b4; display: flex; flex-direction: column; overflow: hidden; background: linear-gradient(90deg, #f2f2f2, #fff); }
.btn { width: 16px; height: 16px; display: flow-root; background: #f7f7f7; }
.btn::before { content: ""; display: block; width: 9px; height: 5px; background: #555; margin: 6px 0 0 3px; }
.up { border-bottom: 1px solid #b4b4b4; }
.up::before { clip-path: polygon(0 100%, 50% 0, 100% 100%); }
.dn::before { clip-path: polygon(0 0, 50% 100%, 100% 0); }
.handle { height: 158px; background: #e4e4e4; border-bottom: 1px solid #b4b4b4; }
.fill { flex: 1; }
.tail { height: 16px; background: #e2e2e2; border: solid #b4b4b4; border-width: 1px 0; }
.hs { border-top: 1px solid #b4b4b4; display: flex; }
.hs .btn::before { width: 5px; height: 9px; margin: 3px 0 0 5px; }
.lf::before { clip-path: polygon(100% 0, 0 50%, 100% 100%); }
.rt::before { clip-path: polygon(0 0, 100% 50%, 0 100%); }
.hh { width: 91px; background: linear-gradient(#f2f2f2, #fff); border: solid #b4b4b4; border-width: 0 1px; }
.hf { flex: 1; background: #e2e2e2; border-right: 1px solid #b4b4b4; }
.corner { border: solid #b4b4b4; border-width: 1px 0 0 1px; background: #efefef; }
.tabs { display: flex; height: 29px; margin-top: 1px; border-top: 1px solid #b4b4b4; font-size: 13px; letter-spacing: -.15px; }
.tab { border: 1px solid #aaa; border-top: 0; border-radius: 0 0 3px 3px; text-align: center; }
.back { width: 78px; height: 26px; line-height: 26px; padding-right: 2px; background: #dcdcdc; }
.front { width: 66px; height: 28px; line-height: 29px; background: #fafafa; }
.split { width: 7px; flex: none; background: radial-gradient(circle, #aaa .7px, transparent 1px) 2px 0 / 4px 4px repeat-y; clip-path: inset(408px 0 402px 0); }
.canvas { width: 1657px; height: 827px; margin-top: 1px; border: 1px solid #b0b0b0; background: #fff; }
#map { width: 1655px; height: 825px; }
#map path { stroke: #232323; stroke-width: 1.3; stroke-linejoin: round; }
.land { fill: #729b6f; }
.study { fill: #fff; }
.lines { fill: none; }

.status { height: 29px; flex: none; padding-top: 2px; display: grid; align-items: center; padding-left: 4px; font-size: 13px; white-space: nowrap; grid-template-columns: 996px 65px 128px 33px 34px 105px 24px 56px 102px 56px 95px 20px 57px 23px 95px 20px; }
.locate { width: 232px; height: 26px; background: #fff; border: 1px solid #aaa; border-radius: 3px; display: flex; align-items: center; gap: 8px; padding-left: 10px; color: #7a7a7a; }
.locate svg { width: 16px; height: 16px; }
.lbl { letter-spacing: -.3px; }
.box { height: 25px; line-height: 23px; background: #fff; border: 1px solid #aaa; border-radius: 3px; padding-left: 5px; display: flex; justify-content: space-between; align-items: center; }
.ctr { width: 122px; letter-spacing: -.1px; }
.combo { width: 92px; padding-left: 3px; }
.combo .a { width: 26px; height: 23px; background: linear-gradient(#fcfcfc, #eee); clip-path: none; }
.combo .a::before { content: ""; display: block; margin: 9px 0 0 8px; width: 10px; height: 6px; background: #666; clip-path: polygon(0 0, 100% 0, 50% 100%); }
.spin { width: 92px; }
.spin i { width: 17px; height: 23px; border-left: 1px solid #b4b4b4; background: #f6f6f6; }
.spin i::before, .spin i::after { content: ""; display: block; width: 9px; height: 6px; margin: 4px 0 0 3px; background: #555; clip-path: polygon(0 100%, 50% 0, 100% 100%); }
.spin i::after { margin-top: 3px; clip-path: polygon(0 0, 50% 100%, 100% 0); }
.chk { width: 17px; height: 17px; background: #fff; border: 1px solid #b0b0b0; }
.on.chk::before, .cb.on::before { content: ""; display: block; width: 5px; height: 10px; margin: 1px 0 0 4px; border: solid #000; border-width: 0 2px 2px 0; transform: rotate(36deg); }
.mouse { width: 18px; height: 20px; }
.lock { width: 15px; height: 18px; }
.crs { width: 20px; height: 18px; }
.msg { width: 20px; height: 20px; }
```
FILE: app.js
```js
// Layer tree: [name, symbol kind, colour, flags]  (x = expandable, c = checked, u = underlined)
const LAYERS = [
  ['RECREATIONAL', 'dot', '#ea5f94'], ['FINANCIAL INSTITUITIONS', 'dot', '#b78cf0'], ['COMMERCIAL', 'dot', '#00d6c4'],
  ['MANUFACTURING', 'dot', '#ffb000'], ['INDUSTRIAL SITES', 'sdot', '#64500c'], ['SWAMP', 'sq', '#987db7'], ['POND', 'sq', '#b7484b'],
  ['POPULATION DENSITY', 'poly', '', 'x'], ['LAKE', 'sq', '#bccf50'], ['NON-AGRICULTURE LAND', 'poly', '', 'x'],
  ['COASTLINE', 'line', '#a5715a'], ['GEOLOGY', 'poly', '', 'x'], ['BUS TERMINAL', 'bus', ''], ['SEAPORTS', 'port', ''],
  ['AIRPORTS', 'air', ''], ['TELECOMMUNICATIONS', 'dot', '#e62fa0', 'u'], ['ROADS', 'line', '#e1dcf0'], ['FORESTS', 'sq', '#729b6f'],
  ['STUDY AREA', 'sq', '#fff', 'c'], ['BATAS_DESA_DESEMBER', 'sq', '#729b6f', 'c'], ['ELDERLY', 'poly', '', 'x'],
  ['POPULATION', 'sq', '#f7fbff'], ['ADULT', 'poly', '', 'x'], ['YOUNG', 'poly', '', 'x'], ['DEM SLOPE', 'dem', '', 'x'],
  ['DEM (STUDY AREA)', 'dem', '', 'x'], ['DEM (ALL)', 'dem', '', 'x'], ['BUILDINGS', 'sq', '#a57058'], ['WHOLE AREA', 'sq', '#b7484b'],
  ['STUDY AREA BORDER', 'rsq', '#fff'], ['task1.1 total_num_family', 'poly', '', 'x'], ['HOTSPOTS', 'pts', '', 'x'],
  ['task1.1 total_num_people', 'poly', '', 'x']
];
const svg = s => `<svg width="20" height="20" viewBox="0 0 20 20">${s}</svg>`;
const SYM = {
  dot: c => svg(`<circle cx="10.5" cy="10" r="4.700" fill="${c}" stroke="#333"/>`),
  sdot: c => svg(`<circle cx="8" cy="10" r="3.500" fill="${c}" stroke="#332"/>`),
  sq: c => svg(`<rect x="1" y="1" width="18" height="18" fill="${c}" stroke="#333"/>`),
  rsq: c => svg(`<rect x="1" y="1" width="18" height="18" fill="${c}" stroke="#f55"/>`),
  line: c => svg(`<path d="M.5 10h19" stroke="${c}" stroke-width="2"/>`),
  poly: () => '<svg width="20" height="14"><use href="#poly"/></svg>',
  bus: () => svg('<path d="M2 5h7v8H2zM1 7v3M10 7v3M2 10h7M3 14v1M8 14v1" fill="none" stroke="#f5b335" stroke-width="1.300"/>'),
  port: () => svg('<path d="M4 5.500h4v4.500h1l-.5 2h1.500v2H2v-2h1.500L3 10h1z" fill="#0a4dff"/>'),
  air: () => svg('<path d="M10 2q1 0 1 3v3l7 3v2l-7-2v4l2 2v1l-3-1-3 1v-1l2-2v-4l-7 2v-2l7-3V5q0-3 1-3z" fill="#f11"/>'),
  dem: () => svg('<path d="M2.500 2h17v17h-17z" fill="#afc8e6"/><path d="M2.500 2h5.500v5.500H2.500zM14 2h5.500v5.500H14zM8.500 7.500H14V13H8.500zM2.500 13H8v5.500H2.500zM14 13h5v5.500h-5z" fill="#2d3f55"/>'),
  pts: () => svg('<g fill="#ccc" stroke="#888"><circle cx="4.500" cy="15" r="1.300"/><circle cx="7" cy="6.500" r="1.300"/><circle cx="15.500" cy="3" r="1.300"/></g>')
};
document.getElementById('tree').innerHTML = LAYERS.map(([n, k, c, f = '']) =>
  `<div class="row"><span class="tw${f.includes('x') ? ' open' : ''}"></span><span class="cb${f.includes('c') ? ' on' : ''}"></span>` +
  `<span class="sym">${SYM[k](c)}</span><span class="name${f.includes('c') ? ' on' : ''}${f.includes('u') ? ' ul' : ''}">${n}</span></div>`).join('');

// Map sheets: each letter is the origin of a sheet digitised at three units per pixel.
const ORIGIN = { A: [550, 360], B: [880, 220], C: [740, 560], D: [860, 450] };
const hash = (x, y) => { const s = Math.sin(x * 12.9898 + y * 78.233) * 43758.5453; return s - Math.floor(s); };
function parse(text) {
  let o = ORIGIN.A; const pts = [];
  for (const t of text.trim().split(/\s+/)) {
    if (ORIGIN[t]) { o = ORIGIN[t]; continue; }
    const [x, y] = t.split(',').map(Number);
    pts.push([o[0] + x / 3, o[1] + y / 3]);
  }
  return pts;
}
// Midpoint displacement gives surveyed borders their natural wobble.
function wobble(a, b, out, k) {
  const dx = b[0] - a[0], dy = b[1] - a[1], len = Math.hypot(dx, dy);
  if (len < 3.5) { out.push(b); return; }
  const mx = (a[0] + b[0]) / 2, my = (a[1] + b[1]) / 2;
  const d = (hash(Math.round(mx * 9), Math.round(my * 9)) - .5) * Math.min(.22, 2.2 / len) * k;
  const m = [mx - dy * d, my + dx * d];
  wobble(a, m, out, k); wobble(m, b, out, k);
}
function path(pts, k = 1, close) {
  const out = [pts[0]];
  for (let i = 1; i < pts.length; i++) wobble(pts[i - 1], pts[i], out, k);
  if (close) wobble(pts[pts.length - 1], pts[0], out, k);
  return 'M' + out.map(p => p[0].toFixed(1) + ' ' + p[1].toFixed(1)).join('L') + (close ? 'Z' : '');
}
const LAND = `A 45,408 70,395 70,375 82,350 65,325 70,280 70,250 95,245 105,222 115,212 150,215 165,208 170,190 177,170 183,150 180,130 183,110 215,97 235,85 262,72 290,58 320,75 355,92 370,115 395,125 415,128 425,150 420,162 445,175 475,203 480,190 490,188 515,200 535,197 548,230 570,228 600,225 615,230 622,248 655,258 695,252 715,225 715,205 722,188 750,173 810,160 845,167 870,130 895,122 905,95 945,75 960,57 978,60 985,25
B 0,440 30,425 45,390 55,350 60,290 75,270 75,240 105,235 128,212 105,190 110,170 160,160 185,165 192,125 190,98 220,98 240,112 290,68 300,80 318,130 335,98 375,78 415,70 435,43 465,43 505,50 520,40 570,42 600,65 640,82 655,78 670,95 700,130 702,152 742,158 750,140 775,130 790,132 800,120 815,115 825,138 850,155 857,175 835,205 795,215 778,222 795,242 765,262 775,275 735,287 752,295 762,310 763,330 770,345 785,372 835,388 840,405 865,440 900,465 975,505 990,535 1010,545 1005,520 1022,548 1040,555 1100,605 1130,630 1130,650 1155,670 1150,685 1170,688 1205,683 1222,700 1215,730 1175,755 1145,788 1110,785 1080,772 1050,785 985,778 970,788 945,770 870,755 835,742 835,725 820,722 808,705 803,685 775,665 768,672 790,690 808,730 822,765 825,800 795,785 775,775 730,790 700,815 690,840
D 755,140 750,170 735,175 715,225 708,250 690,262 675,300 672,340 655,350 668,380 665,420 620,420 580,410 520,382
C 845,120 825,158 787,158 785,190 740,225 720,250 705,300 685,335 632,337 642,370 620,420 615,450 600,470 597,490 580,510 583,540 560,575 552,600 537,625 537,655 548,680 550,725 565,745 632,768 600,785 545,800 515,845 490,850 510,852 550,835 590,835 588,880 592,900 592,955 560,978 610,980 622,995 595,1005 575,1022 625,1010 640,1000 650,1010 645,1060 635,1103 590,1090 540,1082 490,1068 410,1068 365,1080 342,1100 335,1070 325,1050 330,1030 317,1020 320,980 328,965 290,950 275,930 283,900 283,860 265,852 270,830 258,810 258,785 242,765 245,735 262,700 280,675 295,645 297,615 330,588 300,570 292,555 255,545 252,525 220,493 185,458 135,440 127,400 122,345 92,310 75,285 80,260 67,235 75,200 85,170 105,150 97,118 30,155
A 550,775 512,778 508,740 495,700 495,678 475,668 450,665 455,620 470,600 490,570 520,562 560,568 598,530 585,500 560,460 545,430 540,400 525,380 505,370 490,385 488,402 470,388 420,400 375,425 345,432 340,460 300,475 290,488 265,478 240,472 200,470 195,455 180,448 185,420 165,405 120,415 65,422`;
const STUDY = `C 875,57 845,120 825,158 787,158 785,190 740,225 720,250 705,300 685,335 632,337 642,370 620,420 615,450 600,470 597,490 580,510 583,540 560,575 552,600 537,625 537,655 548,680 550,725 565,745 600,755 632,768 628,735 622,710 635,695 715,665 715,640 730,610 737,632 780,628 815,605 850,560 870,525 920,475 930,430 945,430 945,460 960,478 975,455 995,465 1000,440 1035,425 1065,423 1068,400 1035,395 1050,360 1055,330 1078,285 1070,272 1045,285 1045,250 1015,238 990,232 998,180 1010,125 1028,115 1025,92 980,92 940,82`;
const LINES = `
A 240,85 238,110 248,145 254,185 240,215 205,240 185,280 170,300 172,325 195,340 212,352 217,372 205,390 185,398 140,402 110,418
A 65,322 110,318 170,303
A 180,345 160,350 130,370 110,400 80,418
A 355,92 350,130 357,170 335,205 330,225 290,242 280,245 255,270 238,290 240,315 255,335 258,355 240,365
A 280,245 300,275 303,300 285,320 283,345 290,365 290,430 260,440 265,470
A 300,275 335,290 345,315 385,335
A 290,245 320,255 355,280 383,305
A 385,335 380,310 385,260 410,235 385,230 392,190 405,175 425,162
A 405,175 430,190 435,220 425,250 435,280 433,300 410,320 385,335
A 475,205 470,250 460,295 440,315 425,320 430,300
A 548,230 525,260 540,285 550,310 535,330 505,352 490,385
A 425,320 475,320 490,335 500,355
A 412,320 412,398
A 240,365 245,400 255,450 258,468
A 240,370 265,410 280,435
A 290,365 320,350 330,400 350,430
A 330,350 365,385 360,430
A 325,350 345,320
A 340,355 390,360 385,335
A 365,370 375,395 370,425
A 390,340 400,370 412,375
A 215,370 240,360 250,385
A 215,350 240,350
A 545,285 580,310 585,330 560,335 550,360 570,395 600,435 635,462 655,458 658,445 635,425 630,380 630,350 610,310 585,310
A 632,375 655,378 665,410 685,440 688,460 675,470 635,470
A 548,440 590,455 635,470 635,510 620,528 600,530
A 635,475 665,478 672,495 660,507 635,495
A 660,507 685,530 715,515 745,490 770,488
A 685,530 620,528
A 750,173 760,215 763,275 755,325 738,350 740,375 770,408
A 760,215 785,207 805,207 815,245 862,255 865,283 840,280 763,273
A 865,283 887,283 890,310 905,340 917,380 918,408
A 755,327 810,332 855,322 850,290
A 855,322 865,405
A 770,408 820,420 865,405 918,408
A 740,375 705,378 698,400 715,425 700,450 700,480 692,515
A 770,408 745,440 725,465 718,490 700,512
A 770,408 790,435 812,440 815,455 825,465 900,460 950,458
A 812,445 770,490 755,515 775,550 800,572 830,555 862,525 860,505 825,465
A 755,515 725,548
A 855,495 900,492 945,485 972,462
A 970,57 1030,80 1022,110 1030,130 1022,180 1027,210 1022,235 995,240 990,290 985,320 988,350 970,357 915,358
A 970,357 990,365 1030,385 1055,395
A 990,365 980,410 975,455
A 918,408 922,435 955,455
A 975,470 985,485 1050,485 1080,470
A 600,528 660,535 720,545 720,610
A 720,545 760,568 800,572 860,560 880,575 885,625 870,635
A 510,565 520,598 570,600 620,588 715,570
A 500,660 530,625 575,610 610,600 660,585 718,575
A 605,630 650,625 680,605 725,612 790,625 830,635 885,635
A 605,630 610,600
A 580,640 690,632 725,612
A 580,640 585,755
A 655,640 662,690 667,718
A 662,690 700,660 735,635 785,620
A 730,645 880,635
A 730,645 728,685 705,690 675,712
A 728,685 800,690 865,672
A 870,515 930,510 970,520 990,540
A 862,510 870,545 875,575 920,545 985,550 1055,575
A 885,620 925,612 930,645 970,680 950,705 910,712 870,685 885,640
A 1055,570 1050,590 985,605 960,645
A 1090,468 1080,500 1060,545 1000,560
A 680,735 720,760 750,785 745,690
A 860,690 870,740 960,740
B 215,100 210,150 200,165 195,240 200,262 265,265 262,245 278,190 265,165 230,158 212,155
B 220,150 290,158 325,168
B 318,130 325,168 322,230 328,280 330,310
B 265,265 290,265 322,280
B 400,75 385,125 375,160 355,190 328,190
B 470,45 455,85 428,125 420,160 395,210 385,238 350,243 328,285
B 505,55 475,120 450,175 440,215 410,238 360,243
B 590,60 545,85 530,125 515,180 525,235 515,245
B 590,60 575,85 588,140 580,175 590,200 575,225
B 640,82 625,110 615,150 605,200 600,235
B 655,85 640,140 630,180 620,215
B 665,95 655,150 635,215
B 680,115 650,160 640,210
B 690,125 670,165 660,205
B 700,145 680,180 670,210
B 742,158 745,190 755,213
B 712,155 690,190 670,210
B 742,185 800,175 810,180 840,200
B 800,178 790,210
B 430,212 480,215 520,180
B 360,245 445,265 447,215
B 445,235 520,225
B 445,265 515,245 575,250 590,235 635,218 690,215 780,213
B 55,350 110,355 140,385 155,400 185,405 205,430 210,455 240,470 270,490 285,540 275,580 275,630 300,648 345,640 350,620 340,580 350,500 355,460
B 145,385 175,380 195,340 215,310 218,268
B 215,315 250,320 245,345 265,360 262,385 230,400 200,425
B 290,270 285,300 300,330 295,350 265,355
B 300,275 320,300 330,308 365,308 378,320 360,345 325,350 300,350
B 378,320 430,345 445,310 447,265
B 430,345 428,400 400,430 365,455 310,460 295,440 305,390 330,350
B 210,455 300,445
B 445,310 470,330 490,340 590,325 600,315 570,310 500,325
B 470,330 465,300 500,280 520,270
B 485,335 495,300 540,300
B 450,300 480,265 520,250
B 520,235 530,265 550,300 552,270 560,245 575,280 600,305
B 590,250 600,275 625,300
B 600,315 610,350 612,390
B 635,220 640,300 645,340 655,390
B 650,215 655,275 665,280 675,250 665,215
B 680,220 690,280 670,310 685,370
B 715,285 710,330 680,370 645,390 600,395 590,400
B 710,335 715,350 770,348
B 785,375 735,380 705,395 685,430 640,448 620,490 600,490 570,455 540,475 535,500
B 735,380 770,365
B 500,435 500,465 535,500 530,540 495,560 465,578
B 428,370 480,385 505,410 535,400 545,345 575,375 590,400 590,430 500,435 430,420
B 430,345 440,360 495,380 535,375
B 500,465 495,465 360,458 390,485 385,540 395,558 450,555 460,565 495,530 500,470
B 360,458 430,425
B 590,430 575,455
B 540,530 580,522 640,535 655,560 650,590 615,622 550,625 530,640 535,675 565,700
B 655,550 690,530 672,505 680,480 700,455 690,430
B 690,430 700,455 720,470 740,450 745,475 775,500 770,530 735,545 690,545
B 700,450 720,420 780,390 830,385
B 730,460 750,420 800,390
B 760,480 790,450 800,415
B 795,390 795,425 830,425
B 833,410 755,565
B 838,415 810,500 785,585
B 845,425 800,590
B 855,440 815,600
B 865,450 835,615
B 880,460 850,630
B 887,465 860,632
B 895,465 870,635
B 755,565 800,600 850,635 890,635 895,600
B 840,495 865,490 860,510 845,505
B 895,500 890,535 895,600
B 890,535 960,530 985,520
B 905,475 900,500 920,525
B 930,485 915,510
B 945,492 930,515
B 960,500 945,520
B 960,530 905,600
B 985,535 930,610
B 1000,545 945,620
B 1020,555 985,600
B 1030,555 1005,600
B 1045,560 1025,600
B 1060,575 1045,605
B 1085,590 1060,640
B 895,605 945,630 965,630 970,600 1000,600 1030,610 1050,620 1055,660
B 1105,605 1075,640 1060,670 1130,640
B 950,630 945,690 930,770
B 895,605 895,700 885,755
B 970,630 965,670 985,710 1000,735
B 985,710 985,778
B 1055,655 1020,660 1000,690 1000,735 1050,735
B 1055,660 1050,735 1065,775
B 1060,670 1080,670 1085,740 1080,772
B 1080,670 1130,665 1160,695 1170,688
B 1110,670 1125,715 1150,740 1205,745
B 840,635 835,735
B 930,705 895,700 840,725
B 890,705 880,755
B 870,715 860,750
B 465,578 500,590 545,610 550,625
B 500,590 450,640 440,690
B 345,620 375,630 410,625 405,650 440,655
B 655,600 730,590 745,610 640,635 640,690
B 645,645 700,650 740,655 770,670
B 642,665 720,665
B 640,690 690,695 700,650
B 655,590 690,575 725,590 760,640 775,665
B 750,605 780,630 840,650 835,690
B 760,640 835,680
B 690,545 700,575 740,580 800,600
B 565,700 605,700 620,720 650,695 660,745 640,790 620,800
B 550,700 548,740 560,780 600,800 610,770 625,740 615,710
B 660,745 720,690 770,670
B 665,750 725,715 775,690
B 680,765 740,720 780,700
B 690,775 760,730
B 720,750 735,780
B 740,745 755,775
B 760,740 780,775
B 775,740 800,790
B 775,690 780,730 800,750 825,765
B 785,700 805,740
B 405,710 435,700 485,705 490,760 530,810
B 490,705 520,730 538,780 520,810
B 435,700 440,655
B 150,620 205,600 215,640 225,680 260,700 305,715 310,740
B 150,620 165,660 185,680 165,700 190,750 180,800
B 195,605 200,650 215,690 240,730 300,760 345,765
B 185,680 210,720 240,740 225,775
B 300,650 300,690 280,715
B 300,648 320,655 310,710
B 340,650 360,680 420,690
B 340,675 340,720 405,725
B 370,680 375,720
B 320,690 415,700
B 325,670 350,665 405,655
D 60,0 50,50 42,85
D 0,85 62,90 95,125 130,135 155,185 200,175
D 125,120 260,120 340,110
D 62,95 55,150 45,190
D 130,140 100,155 60,180 45,190
D 45,190 90,180 140,170
D 45,215 105,210 150,195
D 45,190 45,215 40,250
D 155,185 150,230 125,265 125,300 70,305
D 235,0 245,30 230,80 240,115
D 270,0 290,40 330,70 410,75 460,60
D 330,40 385,70
D 285,0 340,30 380,40 460,40
D 345,0 340,30
D 375,0 365,40
D 395,0 395,40
D 420,0 425,40
D 240,115 320,90 460,80
D 260,100 300,70
D 340,110 345,140 370,155 380,180 320,180
D 310,130 300,150 310,170 320,180
D 190,185 240,145 300,130
D 225,195 275,165 310,160
D 345,105 400,125 455,95
D 370,125 385,180
D 385,125 385,180
D 400,125 400,180
D 420,120 415,180
D 435,115 430,180
D 380,180 450,175
D 460,0 460,90 450,175
D 500,65 500,90 520,100 530,135 490,150
D 530,105 600,150
D 545,75 580,130 605,155
D 450,175 480,175 490,150 570,150 600,155 650,160
D 480,180 485,200 510,215 550,235 570,225 580,215 660,195
D 510,215 545,180 590,180
D 490,150 530,170 560,175 605,160
D 605,80 620,110 660,115 680,140 740,150
D 640,190 600,210 570,225
D 650,155 650,195
D 660,160 665,200
D 670,175 730,185
D 665,200 680,210 675,230 705,250
D 680,215 715,220
D 450,175 470,215 500,250 685,255
D 490,245 530,295 520,380
D 525,280 680,275
D 530,297 670,297
D 530,310 670,320
D 530,325 670,333
D 530,335 560,340 580,350 600,350 640,390 630,375
D 530,345 560,375 610,375 620,410
D 520,375 500,365 450,360 400,375 385,365 385,345 430,300 450,270 455,245 430,240 430,180
D 410,370 440,330 450,260
D 520,365 470,360 430,365
D 345,390 385,350 420,300 435,260
D 345,390 515,390
D 370,370 380,390
D 345,390 330,330 300,300 300,265 430,268
D 310,255 425,250
D 315,240 428,240
D 340,225 430,225
D 350,205 430,215
D 360,195 430,195
D 300,265 240,225 190,185
D 200,180 260,205 320,255
D 250,200 310,180
D 275,215 310,200
D 320,180 320,245 340,245 335,210 380,180
D 325,195 375,190
D 300,280 415,300
D 305,300 390,332
D 200,210 205,255 235,290 240,330 235,420
D 150,200 205,215 215,215
D 150,235 185,250 215,275
D 235,420 340,422
D 245,420 240,440 260,465 320,495 345,440 345,395
D 240,435 340,440
D 130,300 145,290 165,260 185,255
D 155,310 135,345
D 145,290 150,310 125,350
D 185,260 185,310 160,365
D 215,275 200,320 185,370
D 235,320 195,375 235,350
D 205,390 235,370
D 30,390 60,350 115,330 130,345
D 25,385 115,360
D 118,355 118,425
D 95,330 95,355
D 110,325 110,355
D 125,360 190,385 205,410 240,420
D 165,395 165,430 170,470 180,500
D 205,410 200,470 240,490
D 375,395 410,395 410,450 380,460 375,490 430,490
D 385,460 475,450
D 375,400 370,440 345,450 350,500 385,520 425,520
D 25,430 95,425 140,440 170,460 180,505 135,550 60,490 20,440
D 135,550 200,555 250,545 330,550 385,545
D 165,430 200,430
D 180,440 187,440 187,445 180,445 180,440
D 180,505 240,515 245,545
D 240,490 215,540
D 240,490 300,500 350,540
D 270,480 245,520
D 285,490 260,530
D 300,500 270,540
D 320,495 360,540
D 340,515 420,520
D 350,500 320,520
D 135,550 60,600 45,560 25,500
D 130,550 100,600 80,640
D 200,555 155,650 110,690
D 330,550 320,600 345,630
D 155,580 160,640 190,690
D 160,690 155,705 180,740 200,710
D 190,690 110,690
D 190,690 185,655 230,640 280,660 320,660
D 200,590 185,650
D 225,590 240,640
C 110,110 135,90 165,90 180,115 185,180 175,190 130,150 100,125
C 105,150 115,180 150,185 180,190
C 70,235 130,230 145,210 180,190
C 85,290 130,265 185,235 195,210
C 85,290 125,300 150,325 230,310
C 122,340 175,335 235,325 290,320
C 185,235 200,270 240,290 270,310
C 127,385 190,360 210,335 200,385 210,440 220,490
C 210,335 240,360 250,400 250,455 220,490
C 235,345 320,345
C 240,365 320,365
C 250,390 320,385
C 255,410 315,400
C 255,440 300,440
C 250,455 300,450
C 245,475 280,470 280,510 230,495
C 280,470 315,480
C 330,290 320,380 315,430 315,500 320,555
C 320,380 380,385 430,400 460,390
C 345,385 320,430
C 370,400 315,470
C 370,435 370,520 385,540
C 330,440 410,435 415,480 405,530 385,545
C 430,400 410,435
C 415,460 480,455
C 415,490 485,480
C 410,515 460,500 530,535
C 410,530 470,515
C 415,480 480,470
C 490,450 490,490 530,530 575,510 597,490
C 480,455 490,450 510,430 610,450
C 335,290 400,300
C 335,310 405,325
C 330,328 400,345
C 330,350 400,365
C 400,290 410,340 430,400
C 420,290 425,340 445,390
C 440,330 445,390
C 500,240 480,300 455,350 430,410
C 520,290 545,350 590,410 610,420
C 545,325 600,310 620,330 690,330
C 470,360 550,360 545,325
C 510,360 520,400 545,405 560,375
C 550,290 560,310 580,320
C 320,555 350,565 385,550 420,560 440,580 470,570 495,540 580,510
C 220,493 280,510 315,520
C 250,520 315,545
C 265,535 300,555 292,570
C 320,560 330,580 375,620 385,670
C 405,565 395,620 385,670 395,700
C 470,575 480,610 460,640 410,670
C 475,600 480,660 485,690
C 385,550 410,530
C 297,645 320,650 315,690 300,720 305,770 320,790
C 385,675 350,690 340,730 305,725
C 340,690 335,750
C 395,700 360,740 355,800
C 410,670 395,695 425,730 420,770 405,800 355,800
C 245,750 360,750
C 260,775 350,775
C 262,790 350,785
C 410,670 485,690 460,700 395,700
C 410,670 440,665 540,670
C 485,690 530,660 540,640
C 485,690 520,730 560,745
C 485,690 450,740 480,760 540,770
C 425,730 470,720 545,725
C 420,770 480,780 545,800
C 345,790 355,840 410,845 405,800
C 258,800 285,795 280,820 260,820
C 320,790 325,820 345,820 350,800
C 300,790 290,825 275,850
C 410,800 470,805 515,845
C 415,815 440,835 490,850
C 410,845 490,850
C 355,840 340,870 325,890 410,895 400,850
C 283,905 385,915
C 280,925 400,940
C 290,940 380,935
C 325,955 395,970 400,940
C 400,940 480,950 500,940
C 395,965 480,965
C 395,995 480,1000 480,960
C 320,980 360,975 395,995 360,1020 355,1050 345,1060
C 330,1040 400,1030
C 400,905 410,940
C 425,900 430,935
C 440,900 445,940
C 460,890 455,940
C 380,1010 400,1030 470,1045 475,1010 460,1000
C 410,1000 415,1010 440,1010 440,1000
C 475,1020 560,1000 565,970
C 435,1040 440,1068
C 465,1040 470,1068
C 500,1040 498,1068
C 470,1045 500,1040 550,1050 560,1010
C 535,1045 540,1080
C 580,1020 575,1085
C 605,1020 605,1090
C 615,1045 645,1060
C 630,1010 610,1050 630,1085
C 565,990 610,985
C 565,1005 600,1000
C 500,870 560,860 588,870
C 520,890 590,900
C 545,890 545,950
C 570,890 575,920 592,925
C 500,900 520,940 500,990 520,960
C 550,835 548,870
C 552,595 600,600 650,645 665,650
C 545,610 600,625 655,670
C 540,625 590,645 640,690
C 540,655 600,680 635,705
C 555,600 620,640 650,665
C 548,680 560,690 600,710 620,720
C 560,700 555,735
C 597,485 640,500 705,515
C 615,495 635,525 660,560 680,590
C 620,455 665,465 690,435 755,440
C 632,337 680,340 700,370 685,410 685,430
C 680,337 735,330 770,320
C 700,370 735,360 800,375 820,345
C 735,355 740,370
C 665,465 665,485 705,490 712,462 665,465
C 690,435 700,465
C 705,515 715,545 750,535 765,545 750,600 730,610
C 715,465 735,500 790,520 840,520
C 705,515 725,495
C 820,345 780,440
C 830,345 790,470
C 838,345 795,480
C 848,350 815,470
C 770,440 760,480 740,500
C 740,450 730,490
C 795,480 850,485 900,470
C 735,500 730,510
C 875,395 845,430 850,460 870,450
C 850,395 880,400 920,405
C 640,640 665,610 720,590
C 680,590 720,595
C 650,590 680,590
C 690,580 700,600 720,600
C 615,570 635,570 632,580 615,578 615,570
C 762,357 770,352
C 672,540 695,540 690,560 675,555
C 705,300 770,320
C 720,270 745,285 760,310
C 845,120 880,120 870,150 850,190 850,230
C 825,158 870,150
C 880,160 930,130 985,130
C 900,190 895,160
C 925,130 900,185
C 850,190 900,190 990,180
C 855,215 940,210
C 960,150 965,200 990,230
C 940,160 1000,160
C 985,90 985,110 1005,120
C 1005,92 1005,110 1025,115
C 787,190 780,250
C 800,165 795,260
C 815,160 800,230
C 825,160 810,250
C 745,230 760,280
C 755,225 770,270
C 765,215 775,265
C 850,230 930,225
C 850,245 930,240
C 660,650 675,680
C 670,645 685,670
C 680,640 695,668
C 690,635 705,662
C 700,625 712,655
C 755,560 745,600
C 770,545 760,600 800,595
C 780,560 800,560 800,590
C 840,520 820,545 850,560
C 800,540 830,530
C 870,490 850,520
C 885,475 870,505
C 905,420 890,460
C 965,300 970,270 940,265
C 930,270 900,250 905,300
C 480,30 540,45 560,60
B 0,437 20,445 55,485 80,540 105,555 135,590 150,620`;
// Patches of tiny parcels: sheet, centre, radii, parcel size.
const PATCHES = [
  ['C', 250, 105, 50, 38, 13], ['C', 290, 195, 105, 45, 15], ['C', 245, 150, 45, 35, 13], ['C', 350, 170, 40, 55, 20], ['C', 270, 275, 65, 30, 16],
  ['C', 450, 270, 70, 45, 22], ['C', 380, 340, 55, 35, 21], ['C', 520, 250, 40, 25, 16], ['C', 640, 220, 95, 50, 23], ['C', 490, 405, 24, 14, 10],
  ['C', 340, 350, 25, 20, 14], ['C', 505, 745, 50, 35, 15], ['C', 490, 890, 38, 50, 15], ['C', 430, 850, 80, 32, 21], ['C', 520, 700, 30, 40, 20],
  ['C', 550, 920, 42, 45, 22], ['C', 460, 825, 50, 20, 19], ['C', 595, 740, 33, 20, 12], ['C', 810, 265, 38, 28, 12], ['C', 875, 305, 24, 24, 7],
  ['C', 880, 290, 75, 60, 19], ['C', 910, 210, 65, 50, 22], ['C', 905, 370, 50, 50, 20], ['C', 830, 500, 65, 28, 21], ['C', 750, 490, 45, 28, 20],
  ['C', 825, 550, 42, 38, 18], ['C', 755, 617, 22, 11, 7], ['C', 700, 585, 26, 24, 17], ['C', 690, 655, 30, 12, 9], ['C', 912, 445, 16, 22, 8],
  ['C', 755, 240, 28, 40, 21], ['C', 800, 330, 40, 18, 16], ['C', 150, 260, 40, 40, 30], ['C', 310, 800, 45, 40, 22],
  ['C', 975, 375, 30, 60, 9], ['C', 1005, 310, 30, 45, 10], ['C', 985, 425, 25, 30, 9], ['C', 1020, 260, 22, 20, 10],
  ['B', 735, 245, 48, 30, 10], ['B', 600, 235, 15, 10, 6], ['B', 752, 310, 9, 18, 7], ['B', 835, 420, 7, 26, 7], ['B', 630, 805, 22, 18, 9],
  ['B', 1020, 545, 22, 10, 7], ['B', 815, 745, 7, 40, 8], ['B', 1140, 650, 10, 14, 8],
  ['D', 655, 375, 12, 24, 7], ['D', 60, 265, 14, 12, 8], ['D', 42, 190, 8, 10, 6], ['D', 690, 125, 22, 14, 10], ['D', 325, 235, 15, 18, 10],
  ['D', 280, 560, 42, 30, 17], ['D', 390, 510, 30, 25, 16],
  ['A', 240, 365, 10, 8, 5], ['A', 325, 352, 18, 8, 8], ['A', 735, 605, 22, 12, 9], ['A', 722, 548, 8, 8, 5], ['A', 390, 340, 18, 22, 12]
];
function patch([s, cx, cy, rx, ry, g]) {
  const o = ORIGIN[s], nx = Math.ceil(rx / g), ny = Math.ceil(ry / g); let d = '';
  const node = (i, j) => {
    const jx = (hash(cx + i * 7.1, cy + j * 3.7) - .5) * .85, jy = (hash(cy + i * 2.3, cx + j * 9.1) - .5) * .85;
    return [cx + (i + jx + (j & 1) * .4) * g, cy + (j + jy) * g];
  };
  const inside = p => ((p[0] - cx) / rx) ** 2 + ((p[1] - cy) / ry) ** 2 < 1.1;
  const px = p => [o[0] + p[0] / 3, o[1] + p[1] / 3];
  for (let i = -nx; i <= nx; i++) for (let j = -ny; j <= ny; j++) {
    const p = node(i, j); if (!inside(p)) continue;
    for (const [a, b, c] of [[1, 0, 1], [0, 1, 5]]) {
      const q = node(i + a, j + b);
      if (inside(q) && hash(i * 3 + c + cx, j * 5 + cy) > .2) d += path([px(p), px(q)], 1.3);
    }
  }
  return d;
}
// Slender plots that fan out over the delta.
function plots() {
  let d = '';
  for (let k = 0; k < 62; k++) {
    const y = 245 + hash(k, 1) * 205, east = y < 330 ? 92 : 62, x = (y < 330 ? 975 : 955) + hash(k, 2) * (east - 15), r = 5 + hash(k, 3) * 8, t = -1 + hash(k, 4) * 1.2;
    const pts = [];
    for (let a = 0; a < 8; a++) {
      const u = Math.cos(a * .785) * r * 1.4, v = Math.sin(a * .785) * r * .6;
      pts.push([740 + (x + u * Math.cos(t) - v * Math.sin(t)) / 3, 560 + (y + u * Math.sin(t) + v * Math.cos(t)) / 3]);
    }
    d += path(pts, 1.2, true);
  }
  return d;
}
const ISLANDS = `B 898,138 903,142 908,150 903,148
B 1048,178 1053,170 1062,182 1078,195 1068,192 1056,182 1057,205 1068,218 1085,230 1066,222 1054,205 1048,190
B 1025,235 1035,230 1048,245 1030,242
B 1145,315 1149,313 1150,322
B 1155,312 1158,314 1155,317
B 1194,385 1211,398 1200,391
B 810,815 818,812 820,822 812,824
B 870,157 873,159 870,160
B 917,178 920,180 917,181
B 951,239 954,241 951,242
B 980,261 983,262 980,263
B 1183,377 1186,379 1183,380
B 1221,388 1224,389 1221,391
B 1202,475 1205,477 1202,479
B 1185,492 1188,493 1185,495
B 1070,489 1073,491 1070,492
B 1011,802 1014,803 1011,805
B 1159,660 1163,661 1160,663
B 826,797 830,799 827,801
B 1003,517 1015,525 1028,548 1012,545`;
const each = (t, fn) => t.trim().split('\n').map(l => fn(parse(l))).join('');
document.getElementById('map').innerHTML =
  `<path class="land" d="${path(parse(LAND), 1.4, true)}"/>` +
  `<path class="study" d="${path(parse(STUDY), 1.4, true)}"/>` +
  `<path class="land" d="${each(ISLANDS, p => path(p, 1, true))}"/>` +
  `<path class="lines" d="${each(LINES, p => path(p))}${PATCHES.map(patch).join('')}${plots()}"/>`;
```
